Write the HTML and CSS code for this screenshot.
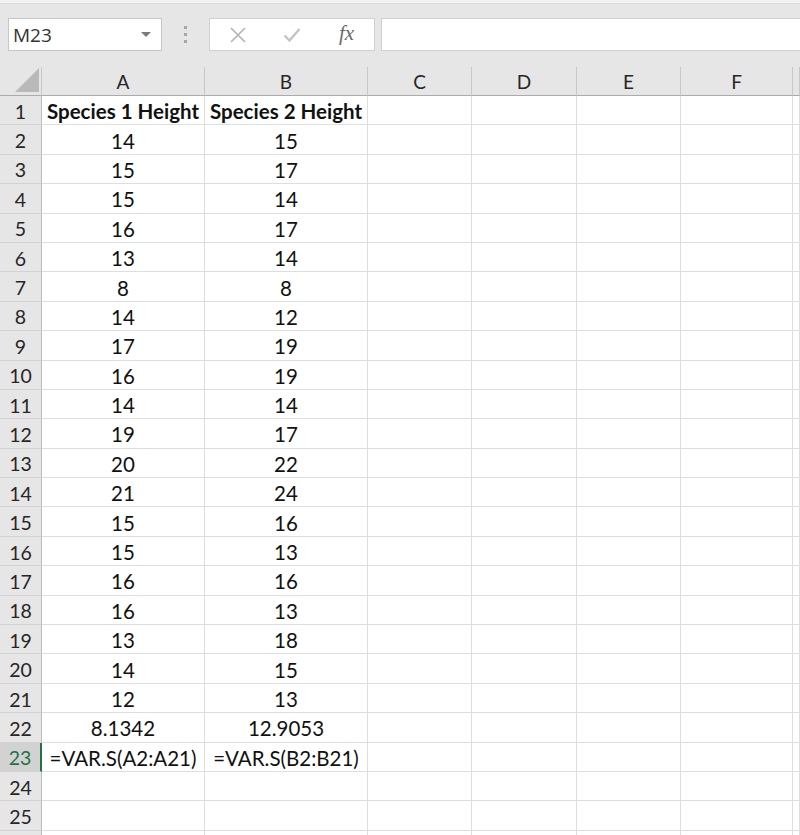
FILE: index.html
```html
<!DOCTYPE html>
<html>
<head>
<meta charset="utf-8">
<link rel="stylesheet" href="styles.css">
</head>
<body>
<div class="topstrip"></div>
<div class="toolbar">
  <div class="namebox">
    <span class="nb-text">M23</span>
    <span class="nb-arrow"></span>
  </div>
  <div class="grip"><i></i><i></i><i></i></div>
  <div class="fxbox">
    <svg class="ico" width="18" height="18" viewBox="0 0 18 18"><path d="M2 2 L16 16 M16 2 L2 16" stroke="#b3b3b3" stroke-width="1.6" fill="none"/></svg>
    <svg class="ico" width="18" height="18" viewBox="0 0 18 18"><path d="M1.5 9.5 L6.5 14.5 L16.5 3" stroke="#c4c4c4" stroke-width="2.4" fill="none"/></svg>
    <span class="fx">fx</span>
  </div>
  <div class="formula"></div>
</div>
<div class="sheet">
  <div class="row head">
    <div class="corner"><span class="tri"></span></div>
    <div class="ch">A</div><div class="ch">B</div><div class="ch">C</div><div class="ch">D</div><div class="ch">E</div><div class="ch">F</div><div class="ch"></div>
  </div>
  <div class="row"><div class="rh">1</div><div class="c b">Species 1 Height</div><div class="c b">Species 2 Height</div><div class="c"></div><div class="c"></div><div class="c"></div><div class="c"></div><div class="c"></div></div>
  <div class="row"><div class="rh">2</div><div class="c">14</div><div class="c">15</div><div class="c"></div><div class="c"></div><div class="c"></div><div class="c"></div><div class="c"></div></div>
  <div class="row"><div class="rh">3</div><div class="c">15</div><div class="c">17</div><div class="c"></div><div class="c"></div><div class="c"></div><div class="c"></div><div class="c"></div></div>
  <div class="row"><div class="rh">4</div><div class="c">15</div><div class="c">14</div><div class="c"></div><div class="c"></div><div class="c"></div><div class="c"></div><div class="c"></div></div>
  <div class="row"><div class="rh">5</div><div class="c">16</div><div class="c">17</div><div class="c"></div><div class="c"></div><div class="c"></div><div class="c"></div><div class="c"></div></div>
  <div class="row"><div class="rh">6</div><div class="c">13</div><div class="c">14</div><div class="c"></div><div class="c"></div><div class="c"></div><div class="c"></div><div class="c"></div></div>
  <div class="row"><div class="rh">7</div><div class="c">8</div><div class="c">8</div><div class="c"></div><div class="c"></div><div class="c"></div><div class="c"></div><div class="c"></div></div>
  <div class="row"><div class="rh">8</div><div class="c">14</div><div class="c">12</div><div class="c"></div><div class="c"></div><div class="c"></div><div class="c"></div><div class="c"></div></div>
  <div class="row"><div class="rh">9</div><div class="c">17</div><div class="c">19</div><div class="c"></div><div class="c"></div><div class="c"></div><div class="c"></div><div class="c"></div></div>
  <div class="row"><div class="rh">10</div><div class="c">16</div><div class="c">19</div><div class="c"></div><div class="c"></div><div class="c"></div><div class="c"></div><div class="c"></div></div>
  <div class="row"><div class="rh">11</div><div class="c">14</div><div class="c">14</div><div class="c"></div><div class="c"></div><div class="c"></div><div class="c"></div><div class="c"></div></div>
  <div class="row"><div class="rh">12</div><div class="c">19</div><div class="c">17</div><div class="c"></div><div class="c"></div><div class="c"></div><div class="c"></div><div class="c"></div></div>
  <div class="row"><div class="rh">13</div><div class="c">20</div><div class="c">22</div><div class="c"></div><div class="c"></div><div class="c"></div><div class="c"></div><div class="c"></div></div>
  <div class="row"><div class="rh">14</div><div class="c">21</div><div class="c">24</div><div class="c"></div><div class="c"></div><div class="c"></div><div class="c"></div><div class="c"></div></div>
  <div class="row"><div class="rh">15</div><div class="c">15</div><div class="c">16</div><div class="c"></div><div class="c"></div><div class="c"></div><div class="c"></div><div class="c"></div></div>
  <div class="row"><div class="rh">16</div><div class="c">15</div><div class="c">13</div><div class="c"></div><div class="c"></div><div class="c"></div><div class="c"></div><div class="c"></div></div>
  <div class="row"><div class="rh">17</div><div class="c">16</div><div class="c">16</div><div class="c"></div><div class="c"></div><div class="c"></div><div class="c"></div><div class="c"></div></div>
  <div class="row"><div class="rh">18</div><div class="c">16</div><div class="c">13</div><div class="c"></div><div class="c"></div><div class="c"></div><div class="c"></div><div class="c"></div></div>
  <div class="row"><div class="rh">19</div><div class="c">13</div><div class="c">18</div><div class="c"></div><div class="c"></div><div class="c"></div><div class="c"></div><div class="c"></div></div>
  <div class="row"><div class="rh">20</div><div class="c">14</div><div class="c">15</div><div class="c"></div><div class="c"></div><div class="c"></div><div class="c"></div><div class="c"></div></div>
  <div class="row"><div class="rh">21</div><div class="c">12</div><div class="c">13</div><div class="c"></div><div class="c"></div><div class="c"></div><div class="c"></div><div class="c"></div></div>
  <div class="row"><div class="rh">22</div><div class="c">8.1342</div><div class="c">12.9053</div><div class="c"></div><div class="c"></div><div class="c"></div><div class="c"></div><div class="c"></div></div>
  <div class="row"><div class="rh sel">23</div><div class="c">=VAR.S(A2:A21)</div><div class="c">=VAR.S(B2:B21)</div><div class="c"></div><div class="c"></div><div class="c"></div><div class="c"></div><div class="c"></div></div>
  <div class="row"><div class="rh">24</div><div class="c"></div><div class="c"></div><div class="c"></div><div class="c"></div><div class="c"></div><div class="c"></div><div class="c"></div></div>
  <div class="row"><div class="rh">25</div><div class="c"></div><div class="c"></div><div class="c"></div><div class="c"></div><div class="c"></div><div class="c"></div><div class="c"></div></div>
  <div class="row"><div class="rh"></div><div class="c"></div><div class="c"></div><div class="c"></div><div class="c"></div><div class="c"></div><div class="c"></div><div class="c"></div></div>
</div>
</body>
</html>
```

FILE: styles.css
```css
* { box-sizing: border-box; }
html, body {
  margin: 0;
  padding: 0;
  width: 800px;
  height: 835px;
  overflow: hidden;
  background: #ffffff;
  font-family: "Lato", "Open Sans", sans-serif;
  color: #1a1a1a;
}
.topstrip {
  height: 4px;
  background: #f2f2f2;
  border-bottom: 1px solid #dcdcdc;
}
.toolbar {
  height: 63px;
  background: #e6e6e6;
  display: flex;
  align-items: flex-start;
  padding-top: 14px;
  padding-left: 8px;
}
.namebox {
  width: 154px;
  height: 33px;
  background: #fff;
  border: 1px solid #c6c6c6;
  display: flex;
  align-items: center;
  justify-content: space-between;
  padding: 0 10px 0 4px;
}
.nb-text {
  font-family: "Open Sans", sans-serif;
  font-size: 19px;
  color: #333;
}
.nb-arrow {
  width: 0;
  height: 0;
  border-left: 5px solid transparent;
  border-right: 5px solid transparent;
  border-top: 5px solid #7a7a7a;
}
.grip {
  width: 47px;
  height: 33px;
  display: flex;
  flex-direction: column;
  align-items: center;
  justify-content: center;
  gap: 4px;
}
.grip i {
  display: block;
  width: 3px;
  height: 3px;
  background: #a8a8a8;
}
.fxbox {
  width: 166px;
  height: 33px;
  background: #fff;
  border: 1px solid #d0d0d0;
  display: flex;
  align-items: center;
  padding-left: 19px;
  gap: 36px;
}
.fxbox .ico { flex: none; }
.fx {
  font-family: "Liberation Serif", serif;
  font-style: italic;
  font-size: 21px;
  color: #6a6a6a;
  margin-left: 2px;
  margin-top: -3px;
}
.formula {
  margin-left: 6px;
  flex: 1;
  height: 33px;
  background: #fff;
  border: 1px solid #d0d0d0;
  border-right: none;
}
.sheet {
  display: flex;
  flex-direction: column;
}
.row {
  display: grid;
  grid-template-columns: 42px 163px 163px 104px 105px 104px 112px 7px;
  height: 29.4px;
}
.row.head {
  height: 29px;
  background: #e6e6e6;
}
.corner {
  border-right: 1px solid #c8c8c8;
  border-bottom: 1px solid #ababab;
  position: relative;
}
.tri {
  position: absolute;
  right: 2px;
  bottom: 3px;
  width: 0;
  height: 0;
  border-left: 24px solid transparent;
  border-bottom: 24px solid #b9b9b9;
}
.ch {
  border-right: 1px solid #c8c8c8;
  border-bottom: 1px solid #ababab;
  display: flex;
  align-items: center;
  justify-content: center;
  font-size: 19px;
  color: #262626;
  padding-top: 1px;
}
.rh {
  background: #e6e6e6;
  border-right: 1px solid #bdbdbd;
  border-bottom: 1px solid #d2d2d2;
  display: flex;
  align-items: center;
  justify-content: center;
  font-size: 19.5px;
  color: #262626;
  padding-top: 2px;
}
.rh.sel {
  background: #d2d2d2;
  color: #217346;
  border-right: 2px solid #217346;
}
.c {
  border-right: 1px solid #dedede;
  border-bottom: 1px solid #dedede;
  display: flex;
  align-items: center;
  justify-content: center;
  font-size: 20.5px;
  color: #111;
  white-space: nowrap;
  padding-top: 2px;
}
.c.b { font-weight: 700; }
```
